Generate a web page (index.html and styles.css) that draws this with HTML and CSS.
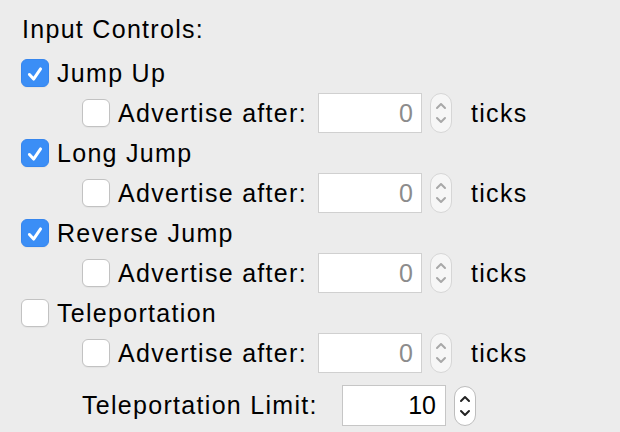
FILE: index.html
```html
<!DOCTYPE html>
<html>
<head>
<meta charset="utf-8">
<link rel="stylesheet" href="styles.css">
</head>
<body>
<div class="panel">
  <div class="heading">Input Controls:</div>

  <div class="row main">
    <span class="cb checked"><svg viewBox="0 0 28 28" width="28" height="28"><path d="M8 14.5 L12.5 19.5 L20 8.5" fill="none" stroke="#fff" stroke-width="3.2" stroke-linecap="round" stroke-linejoin="round"/></svg></span>
    <span class="label">Jump Up</span>
  </div>
  <div class="row sub">
    <span class="cb"></span>
    <span class="label adv">Advertise after:</span>
    <span class="field disabled">0</span>
    <span class="stepper disabled"><svg viewBox="0 0 22 40" width="22" height="40"><path d="M7 15 L11 11 L15 15 M7 25 L11 29 L15 25" fill="none" stroke="currentColor" stroke-width="2" stroke-linecap="round" stroke-linejoin="round"/></svg></span>
    <span class="label unit">ticks</span>
  </div>

  <div class="row main">
    <span class="cb checked"><svg viewBox="0 0 28 28" width="28" height="28"><path d="M8 14.5 L12.5 19.5 L20 8.5" fill="none" stroke="#fff" stroke-width="3.2" stroke-linecap="round" stroke-linejoin="round"/></svg></span>
    <span class="label">Long Jump</span>
  </div>
  <div class="row sub">
    <span class="cb"></span>
    <span class="label adv">Advertise after:</span>
    <span class="field disabled">0</span>
    <span class="stepper disabled"><svg viewBox="0 0 22 40" width="22" height="40"><path d="M7 15 L11 11 L15 15 M7 25 L11 29 L15 25" fill="none" stroke="currentColor" stroke-width="2" stroke-linecap="round" stroke-linejoin="round"/></svg></span>
    <span class="label unit">ticks</span>
  </div>

  <div class="row main">
    <span class="cb checked"><svg viewBox="0 0 28 28" width="28" height="28"><path d="M8 14.5 L12.5 19.5 L20 8.5" fill="none" stroke="#fff" stroke-width="3.2" stroke-linecap="round" stroke-linejoin="round"/></svg></span>
    <span class="label">Reverse Jump</span>
  </div>
  <div class="row sub">
    <span class="cb"></span>
    <span class="label adv">Advertise after:</span>
    <span class="field disabled">0</span>
    <span class="stepper disabled"><svg viewBox="0 0 22 40" width="22" height="40"><path d="M7 15 L11 11 L15 15 M7 25 L11 29 L15 25" fill="none" stroke="currentColor" stroke-width="2" stroke-linecap="round" stroke-linejoin="round"/></svg></span>
    <span class="label unit">ticks</span>
  </div>

  <div class="row main">
    <span class="cb"></span>
    <span class="label">Teleportation</span>
  </div>
  <div class="row sub">
    <span class="cb"></span>
    <span class="label adv">Advertise after:</span>
    <span class="field disabled">0</span>
    <span class="stepper disabled"><svg viewBox="0 0 22 40" width="22" height="40"><path d="M7 15 L11 11 L15 15 M7 25 L11 29 L15 25" fill="none" stroke="currentColor" stroke-width="2" stroke-linecap="round" stroke-linejoin="round"/></svg></span>
    <span class="label unit">ticks</span>
  </div>

  <div class="row limit">
    <span class="label lim">Teleportation Limit:</span>
    <span class="field">10</span>
    <span class="stepper"><svg viewBox="0 0 22 40" width="22" height="40"><path d="M7 15 L11 11 L15 15 M7 25 L11 29 L15 25" fill="none" stroke="currentColor" stroke-width="2" stroke-linecap="round" stroke-linejoin="round"/></svg></span>
  </div>
</div>
</body>
</html>
```

FILE: styles.css
```css
html, body {
  margin: 0;
  padding: 0;
  background: #ececec;
}
body {
  width: 620px;
  height: 432px;
  overflow: hidden;
  font-family: "Liberation Sans", Arial, sans-serif;
  font-size: 25px;
  color: #000;
  letter-spacing: 1.3px;
}
.panel {
  padding: 9px 0 0 21px;
}
.heading {
  height: 44px;
  line-height: 40px;
  padding-left: 1px;
}
.row {
  display: flex;
  align-items: center;
  height: 40px;
}
.row.sub {
  padding-left: 61px;
}
.row.limit {
  margin-top: 12px;
  height: 41px;
  padding-left: 61px;
}
.cb {
  flex: 0 0 auto;
  box-sizing: border-box;
  width: 28px;
  height: 28px;
  border-radius: 6px;
  background: #fff;
  border: 1px solid #c2c2c2;
  box-shadow: 0 1px 1px rgba(0,0,0,0.04);
  margin-right: 8px;
  display: flex;
}
.cb.checked {
  background: #3b8ef6;
  border-color: #3686ee;
}
.label {
  white-space: nowrap;
}
.adv {
  width: 200px;
}
.lim {
  width: 260px;
}
.field {
  box-sizing: border-box;
  width: 104px;
  height: 40px;
  background: #fff;
  border: 1px solid #c6c6c6;
  text-align: right;
  padding-right: 8px;
  line-height: 38px;
  color: #000;
  letter-spacing: 0;
}
.row.limit .field {
  height: 41px;
  line-height: 39px;
  padding-right: 9px;
}
.field.disabled {
  color: #8c8c8c;
  border-color: #d0d0d0;
}
.stepper {
  box-sizing: border-box;
  width: 22px;
  height: 40px;
  margin-left: 8px;
  border-radius: 11px;
  background: #fff;
  border: 1px solid #bdbdbd;
  color: #222;
  display: flex;
  align-items: center;
  justify-content: center;
  overflow: hidden;
}
.stepper svg {
  display: block;
  flex: 0 0 auto;
}
.stepper.disabled {
  background: #f6f6f6;
  border-color: #d6d6d6;
  color: #a8a8a8;
}
.unit {
  margin-left: 19px;
}
```
